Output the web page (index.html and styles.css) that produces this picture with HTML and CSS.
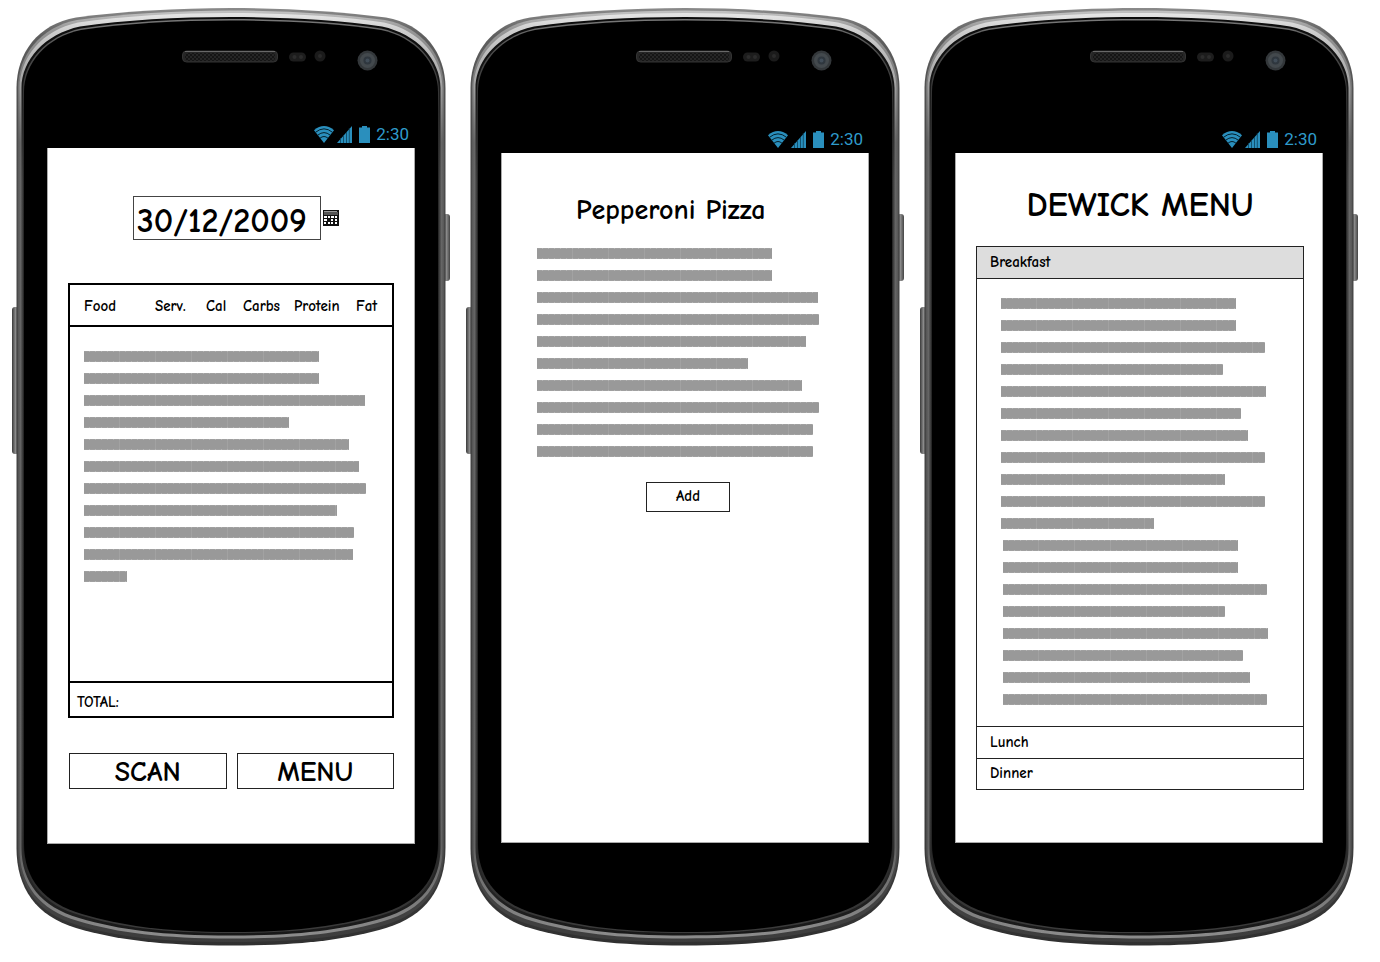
FILE: index.html
```html
<!DOCTYPE html>
<html lang="en">
<head>
<meta charset="utf-8">
<meta name="viewport" content="width=device-width, initial-scale=1">
<title>Dewick Menu</title>
<link rel="stylesheet" href="styles.css">
</head>
<body>
<svg class="defs" width="0" height="0" aria-hidden="true">
  <defs>
    <linearGradient id="rim" x1="0" y1="0" x2="0" y2="1">
      <stop offset="0" stop-color="#8a8a8a"/><stop offset=".03" stop-color="#5e5e5e"/>
      <stop offset=".12" stop-color="#4c4c4c"/><stop offset=".5" stop-color="#444"/><stop offset=".9" stop-color="#3c3c3c"/><stop offset="1" stop-color="#303030"/>
    </linearGradient>
    <linearGradient id="mid" x1="0" y1="0" x2="0" y2="1">
      <stop offset="0" stop-color="#c4c4c4"/><stop offset=".02" stop-color="#979797"/><stop offset=".07" stop-color="#7c7c7c"/>
      <stop offset=".14" stop-color="#5c5c5c"/><stop offset=".9" stop-color="#4c4c4c"/><stop offset="1" stop-color="#3c3c3c"/>
    </linearGradient>
    <linearGradient id="shine" x1="0" y1="0" x2="0" y2="1">
      <stop offset="0" stop-color="#e6e6e6"/><stop offset=".02" stop-color="#cdcdcd"/><stop offset=".07" stop-color="#a8a8a8"/>
      <stop offset=".14" stop-color="#666"/><stop offset=".9" stop-color="#626262"/><stop offset="1" stop-color="#8c8c8c"/>
    </linearGradient>
    <linearGradient id="groove" x1="0" y1="0" x2="0" y2="1">
      <stop offset="0" stop-color="#0c0c0c"/><stop offset=".07" stop-color="#161616"/><stop offset=".18" stop-color="#404040"/>
      <stop offset=".85" stop-color="#3a3a3a"/><stop offset="1" stop-color="#181818"/>
    </linearGradient>
    <linearGradient id="lip" x1="0" y1="0" x2="0" y2="1">
      <stop offset="0" stop-color="#7a7a7a"/><stop offset=".03" stop-color="#505050"/><stop offset=".1" stop-color="#2a2a2a"/>
      <stop offset=".9" stop-color="#242424"/><stop offset="1" stop-color="#3c3c3c"/>
    </linearGradient>
    <linearGradient id="key" x1="0" y1="0" x2="1" y2="0">
      <stop offset="0" stop-color="#3a3a3a"/><stop offset=".5" stop-color="#8a8a8a"/><stop offset="1" stop-color="#444"/>
    </linearGradient>
    <pattern id="mesh" width="4" height="4" patternUnits="userSpaceOnUse">
      <circle cx="1" cy="1" r=".8" fill="#000"/><circle cx="3" cy="3" r=".8" fill="#000"/>
    </pattern>
    <symbol id="shell" viewBox="0 0 438 938" preserveAspectRatio="none">
      <rect x="0" y="299" width="7" height="147" rx="3" fill="url(#key)"/>
      <rect x="431" y="206" width="7" height="67" rx="3" fill="url(#key)"/>
      <path fill="url(#rim)" d="M4.500 80C4.500 45 26 16 64 9.500 110 3.500 165 0 219 0S328 3.500 374 9.500C412 16 433.500 45 433.500 80V840C433.500 880 414 908 374 920 333 932 288 937.500 219 937.500S105 932 64 920C24 908 4.500 880 4.500 840Z"/>
      <path fill="url(#mid)" d="M6 80C6 48 28 19 65 12 110 6 165 2.500 219 2.500S328 6 373 12C410 19 432 48 432 80V840C432 878 413 905 373 917 332 929 288 934 219 934S106 929 65 917C25 905 6 878 6 840Z"/>
      <path fill="url(#shine)" d="M7.500 80C7.500 50 30 22 66 14.500 110 8 165 5 219 5S328 8 372 14.500C408 22 430.500 50 430.500 80V840C430.500 876 411 902 372 913 331 925 288 930.500 219 930.500S107 925 66 913C27 902 7.500 876 7.500 840Z"/>
      <path fill="url(#groove)" d="M9.500 80C9.500 52 33 26 68 18.500 112 12 165 9 219 9S326 12 370 18.500C405 26 428.500 52 428.500 80V840C428.500 874 409 899 371 910 330 922 288 927.500 219 927.500S108 922 67 910C29 899 9.500 874 9.500 840Z"/>
      <path fill="url(#lip)" d="M11 82C11 54 34 28 69 20.500 112 14 165 11 219 11S326 14 369 20.500C404 28 427 54 427 82V838C427 873 407 897 369 907.500 330 919 288 925 219 925S108 919 69 907.500C31 897 11 873 11 838Z"/>
      <path fill="#000" d="M12 84C12 55 35 29 69 22 112 15.500 165 12.500 219 12.500S326 15.500 369 22C403 29 426 55 426 84V836C426 871 406 895 368 906 330 917 288 924 219 924S108 917 70 906C32 895 12 871 12 836Z"/>
      <rect x="170.500" y="43" width="95" height="11" rx="4" fill="#262626" stroke="#333"/>
      <rect x="173" y="45" width="90" height="8" rx="3" fill="url(#mesh)"/>
      <path d="M173 43.500H263" stroke="#686868"/>
      <rect x="277" y="44.500" width="17" height="9" rx="4.500" fill="#1d1d1d"/>
      <circle cx="282.500" cy="49" r="2" fill="#2c2c2c"/><circle cx="289" cy="49" r="2" fill="#2c2c2c"/>
      <circle cx="308" cy="48" r="5.500" fill="#1b1b1b"/><circle cx="308" cy="48" r="2" fill="#2a2a2a"/>
      <circle cx="355.500" cy="52.500" r="10" fill="#33373a"/><circle cx="355.500" cy="52.500" r="7.500" fill="#43494d"/>
      <circle cx="355.500" cy="52.500" r="4" fill="#2f373e"/><circle cx="355.500" cy="52.500" r="2" fill="#414d58"/>
    </symbol>
    <symbol id="wifi" viewBox="0 0 20 17">
      <path fill="#2a8fbd" d="M0 4.200Q10-4.200 20 4.200L10 17Z"/>
      <path fill="none" stroke="#04202c" stroke-width="1" d="M1.500 6.300Q10-.6 18.500 6.300M3.700 9.200Q10 4 16.300 9.200M6 12.200Q10 8.800 14 12.200"/>
    </symbol>
    <symbol id="signal" viewBox="0 0 15 17">
      <path fill="#2a8fbd" d="M15 0V17H0Z"/>
      <path stroke="#0d435a" stroke-width=".8" d="M3.500 12V17M6.500 9V17M9.500 6V17M12.300 2V17"/>
    </symbol>
    <symbol id="battery" viewBox="0 0 11 17">
      <path fill="#2a8fbd" d="M3 0H8V1.500H11V17H0V1.500H3Z"/>
    </symbol>
  </defs>
</svg>

<main class="stage">
  <section class="phone phone--log" aria-label="Food log">
    <svg class="shell" aria-hidden="true"><use href="#shell"/></svg>
    <div class="status">
      <svg class="wifi" aria-hidden="true"><use href="#wifi"/></svg>
      <svg class="signal" aria-hidden="true"><use href="#signal"/></svg>
      <svg class="battery" aria-hidden="true"><use href="#battery"/></svg>
      <time>2:30</time>
    </div>
    <div class="screen screen--log">
      <div class="date">
        <input class="date-input" type="text" value="30/12/2009" aria-label="Date">
        <button class="date-picker" type="button" aria-label="Open calendar">
          <svg width="16" height="16" viewBox="0 0 16 16" aria-hidden="true">
            <path fill="#111" d="M0 0H16V16H0Z"/>
            <path fill="#999" d="M1 1H14V2H1Z"/><path fill="#555" d="M1 2H15V5H1Z"/>
            <path fill="#fff" d="M1 6H4V8H1ZM5 6H7V8H5ZM8 6H11V8H8ZM12 6H14V8H12ZM1 9H4V11H1ZM8 9H10V11H8ZM12 9H14V11H12ZM1 12H3V14H1ZM5 12H7V14H5ZM8 12H10V14H8ZM12 12H14V14H12Z"/>
          </svg>
        </button>
      </div>
      <table class="log">
        <colgroup><col class="c-food"><col class="c-serv"><col class="c-cal"><col class="c-carbs"><col class="c-protein"><col></colgroup>
        <thead><tr><th scope="col">Food</th><th scope="col">Serv.</th><th scope="col">Cal</th><th scope="col">Carbs</th><th scope="col">Protein</th><th scope="col">Fat</th></tr></thead>
        <tbody><tr><td colspan="6">
          <div class="lines">
            <i style="width:235px"></i><i style="width:235px"></i><i style="width:281px"></i><i style="width:205px"></i><i style="width:265px"></i><i style="width:275px"></i><i style="width:282px"></i><i style="width:253px"></i><i style="width:270px"></i><i style="width:269px"></i><i style="width:43px"></i>
          </div>
        </td></tr></tbody>
        <tfoot><tr><td colspan="6">TOTAL:</td></tr></tfoot>
      </table>
      <div class="actions">
        <button class="btn btn--large" type="button">SCAN</button>
        <button class="btn btn--large" type="button">MENU</button>
      </div>
    </div>
  </section>

  <section class="phone" aria-label="Food item">
    <svg class="shell" aria-hidden="true"><use href="#shell"/></svg>
    <div class="status">
      <svg class="wifi" aria-hidden="true"><use href="#wifi"/></svg>
      <svg class="signal" aria-hidden="true"><use href="#signal"/></svg>
      <svg class="battery" aria-hidden="true"><use href="#battery"/></svg>
      <time>2:30</time>
    </div>
    <div class="screen screen--item">
      <h1 class="item-title">Pepperoni Pizza</h1>
      <div class="lines">
        <i style="width:235px"></i><i style="width:235px"></i><i style="width:281px"></i><i style="width:282px"></i><i style="width:269px"></i><i style="width:211px"></i><i style="width:265px"></i><i style="width:282px"></i><i style="width:276px"></i><i style="width:276px"></i>
      </div>
      <button class="btn btn--add" type="button">Add</button>
    </div>
  </section>

  <section class="phone" aria-label="Dining menu">
    <svg class="shell" aria-hidden="true"><use href="#shell"/></svg>
    <div class="status">
      <svg class="wifi" aria-hidden="true"><use href="#wifi"/></svg>
      <svg class="signal" aria-hidden="true"><use href="#signal"/></svg>
      <svg class="battery" aria-hidden="true"><use href="#battery"/></svg>
      <time>2:30</time>
    </div>
    <div class="screen screen--menu">
      <h1 class="menu-title">DEWICK MENU</h1>
      <div class="accordion">
        <button class="tab tab--open" type="button" aria-expanded="true">Breakfast</button>
        <div class="panel">
          <div class="lines">
            <i style="width:235px"></i><i style="width:235px"></i><i style="width:264px"></i><i style="width:222px"></i><i style="width:265px"></i><i style="width:240px"></i><i style="width:247px"></i><i style="width:264px"></i><i style="width:224px"></i><i style="width:264px"></i><i style="width:153px"></i>
          </div>
          <div class="lines lines--more">
            <i style="width:235px"></i><i style="width:235px"></i><i style="width:264px"></i><i style="width:222px"></i><i style="width:265px"></i><i style="width:240px"></i><i style="width:247px"></i><i style="width:264px"></i>
          </div>
        </div>
        <button class="tab" type="button" aria-expanded="false">Lunch</button>
        <button class="tab" type="button" aria-expanded="false">Dinner</button>
      </div>
    </div>
  </section>
</main>
</body>
</html>
```
FILE: styles.css
```css
* { box-sizing: border-box; }

body {
  margin: 0;
  background: #fff;
  color: #000;
  font-family: "Comic Sans MS", "Comic Neue", "Noto Sans", sans-serif;
  font-size: 15px;
  font-weight: 700;
}

button, input { font: inherit; color: inherit; margin: 0; }
h1 { margin: 0; }
.defs { position: absolute; }

.stage {
  display: grid;
  grid-template-columns: repeat(3, minmax(0, 1fr));
  gap: 16px;
  padding: 8px 22px 16px 12px;
}

/* Handset */
.phone {
  position: relative;
  display: flex;
  flex-direction: column;
  min-height: 938px;
  padding: 117px 35px 103px;
}
.phone--log { padding-top: 112px; padding-bottom: 102px; }
.shell { position: absolute; inset: 0; width: 100%; height: 100%; }

.status {
  position: relative;
  display: flex;
  align-items: center;
  justify-content: flex-end;
  height: 28px;
  padding-right: 6px;
  color: #2f9bcb;
  font: 400 17px/28px Roboto, sans-serif;
}
.wifi { width: 20px; height: 17px; margin-right: 3px; }
.signal { width: 15px; height: 17px; margin-right: 7px; }
.battery { width: 11px; height: 17px; margin-right: 6px; }

.screen {
  position: relative;
  flex: 1;
  background: #fff;
  border: 1px solid #aaa;
  border-width: 0 1px 1px;
}

/* Placeholder copy */
.lines { display: grid; gap: 11px; }
.lines i {
  display: block;
  max-width: 100%;
  height: 11px;
  background:
    repeating-linear-gradient(90deg, #a0a0a0 0 5px, #b4b4b4 5px 6px) top / 100% 1px no-repeat,
    repeating-linear-gradient(90deg, #a0a0a0 0 5px, #b4b4b4 5px 6px) bottom / 100% 1px no-repeat,
    repeating-linear-gradient(90deg, #999 0 35px, #a2a2a2 35px 36px);
}

.btn {
  padding: 0;
  background: #fff;
  border: 1px solid #222;
  border-radius: 0;
}

/* Food log */
.screen--log { padding: 48px 20px 0; }
.date { display: flex; align-items: center; gap: 2px; padding-left: 65px; }
.date-input {
  width: 188px;
  height: 44px;
  padding: 6px 3px 0;
  border: 1px solid #444;
  background: #fff;
  font-size: 34px;
}
.date-picker { display: flex; padding: 0; border: 0; background: none; }

.log {
  width: 100%;
  margin-top: 43px;
  border: 2px solid #000;
  border-spacing: 0;
  table-layout: fixed;
}
.log th, .log td { padding: 0; text-align: left; font-weight: inherit; }
.log th { height: 42px; padding-top: 2px; border-bottom: 2px solid #000; }
.log th:first-child { padding-left: 14px; }
.log tbody td { height: 354px; padding: 24px 0 0 14px; vertical-align: top; }
.log tfoot td { height: 35px; padding: 4px 0 0 7px; border-top: 2px solid #000; }
.c-food { width: 85px; }
.c-serv { width: 51px; }
.c-cal { width: 37px; }
.c-carbs { width: 51px; }
.c-protein { width: 62px; }

.actions { display: flex; gap: 10px; margin-top: 35px; padding-left: 1px; }
.btn--large { flex: 1; height: 36px; padding-top: 2px; font-size: 28px; line-height: 32px; }

/* Food item */
.screen--item { display: flex; flex-direction: column; padding: 39px 29px 0 35px; }
.item-title { padding-left: 39px; font-size: 28px; line-height: 36px; }
.screen--item .lines { margin-top: 20px; }
.btn--add { align-self: center; width: 84px; height: 30px; margin-top: 25px; padding-bottom: 3px; }

/* Dining menu */
.screen--menu { padding: 32px 18px 0 20px; }
.menu-title { font-size: 34px; line-height: 40px; text-align: center; }
.accordion { margin-top: 21px; border: 1px solid #222; }
.tab {
  display: block;
  width: 100%;
  height: 31px;
  padding: 0 13px 2px;
  border: 0;
  background: #fff;
  text-align: left;
}
.tab--open { background: #ddd; }
.tab + .tab { border-top: 1px solid #222; }
.panel {
  padding: 19px 24px 21px;
  border: 1px solid #222;
  border-width: 1px 0;
}
.lines--more { margin-top: 11px; padding-left: 2px; }
```
